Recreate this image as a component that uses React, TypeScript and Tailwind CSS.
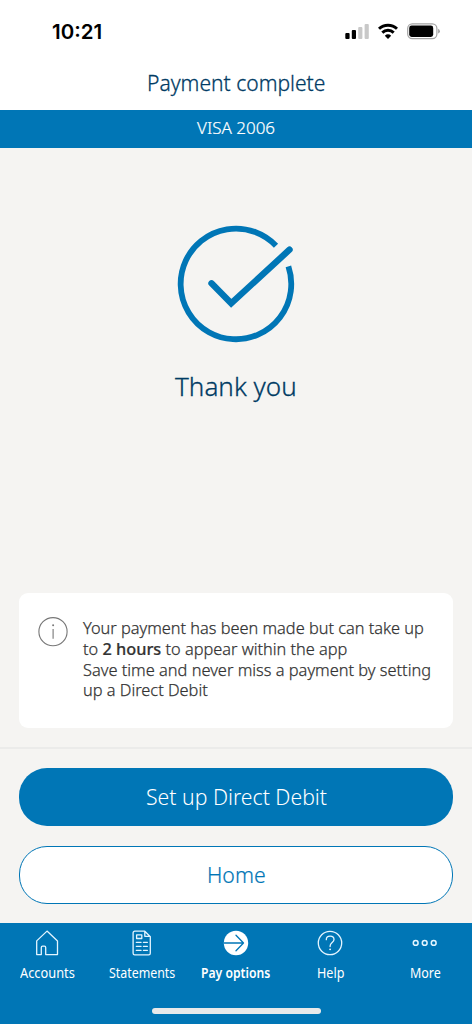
import { useLayoutEffect, useRef, useState, type ReactNode } from 'react';

/** A single line of text, set horizontally to an exact measure. */
function Line({ width, className = '', children }: { width: number; className?: string; children: ReactNode }) {
  const inner = useRef<HTMLSpanElement>(null);
  const [scale, setScale] = useState(1);
  useLayoutEffect(() => {
    if (inner.current) setScale(width / inner.current.offsetWidth);
  }, [width]);
  return (
    <span className={`block whitespace-nowrap ${className}`} style={{ width }}>
      <span ref={inner} className="inline-block origin-left align-top" style={{ transform: `scaleX(${scale})` }}>
        {children}
      </span>
    </span>
  );
}

function StatusBar() {
  return (
    <header className="flex h-[62px] shrink-0 items-start justify-between pt-[21px] pr-[31px] pl-[52px]">
      <Line width={50} className="font-[Inter,sans-serif] text-[20.5px] leading-[22px] font-semibold text-black">
        10:21
      </Line>
      <svg width="96" height="20" viewBox="345 21 96 20" className="shrink-0">
        <rect x="345.3" y="33" width="4.3" height="6" rx="1" />
        <rect x="351.8" y="30" width="4.2" height="9" rx="1" />
        <rect x="358.2" y="27" width="4.2" height="12" rx="1" fill="#c8c8c8" />
        <rect x="364.6" y="24" width="4.2" height="15" rx="1" fill="#c8c8c8" />
        <g fill="none" stroke="#000" strokeWidth="2.9">
          <path d="M379 28.8a13 13 0 0 1 18 0" />
          <path d="M382.3 32.6a8.2 8.2 0 0 1 11.4 0" />
        </g>
        <path d="M388 39l-3.2-3.2a4.7 4.7 0 0 1 6.4 0Z" />
        <rect x="407.7" y="23.9" width="29.2" height="14.8" rx="4.6" fill="none" stroke="#a3a3a3" strokeWidth="1.2" />
        <rect x="409.2" y="25.6" width="24" height="11.4" rx="2.4" />
        <path d="M438.2 28.8q1.6.6 1.6 2.4t-1.6 2.4Z" fill="#999" />
      </svg>
    </header>
  );
}

const tabs = [
  {
    label: 'Accounts',
    width: 55,
    icon: (
      <path d="M9.3 24.4H4.7V10.7L15 .9l10.5 9.8v13.7H13.7v-7.2a1.3 1.3 0 0 0-1.3-1.3h-1.8a1.3 1.3 0 0 0-1.3 1.3Z" transform="translate(0 .2)" />
    ),
  },
  {
    label: 'Statements',
    width: 66,
    icon: (
      <g transform="translate(-.6 0)">
        <path d="M18.4 1.2H8.3a1.6 1.6 0 0 0-1.6 1.6v20.4a1.6 1.6 0 0 0 1.6 1.6h14a1.6 1.6 0 0 0 1.6-1.6V6.8Zm0 0v5.1h5.4" />
        <path d="M10.2 4.9h5.2v3.6h-5.2ZM9.9 12.3h4.8M17 12.3h4M9.9 16.3h4.8M17 16.3h4M9.9 20.3h4.8M17 20.3h4" />
      </g>
    ),
  },
  {
    label: 'Pay options',
    width: 69.5,
    active: true,
    icon: (
      <>
        <circle cx="15" cy="13" r="12.2" fill="#fff" stroke="none" />
        <path d="M3.3 13h19.2M15 5.3l7.5 7.7-7.5 7.7" stroke="#0076b6" strokeWidth="1.3" />
      </>
    ),
  },
  {
    label: 'Help',
    width: 27,
    icon: (
      <>
        <circle cx="15" cy="13" r="11.7" />
        <path d="M11.3 9.7c0-2.1 1.5-3.5 3.8-3.5s3.9 1.4 3.9 3.3c0 3-3.9 3.2-3.9 6.5v.6" />
        <circle cx="15.1" cy="19.3" r=".9" fill="#fff" stroke="none" />
      </>
    ),
  },
  {
    label: 'More',
    width: 30.5,
    icon: (
      <g strokeWidth="1.5">
        <circle cx="5.7" cy="12.9" r="2.4" />
        <circle cx="14.7" cy="12.9" r="2.4" />
        <circle cx="23.7" cy="12.9" r="2.4" />
      </g>
    ),
  },
];

function TabBar() {
  return (
    <nav className="flex h-[101px] shrink-0 flex-col items-center bg-[#0076b6] text-white">
      <div className="grid w-full grid-cols-5 pt-[7px]">
        {tabs.map((tab) => (
          <button key={tab.label} className="flex flex-col items-center">
            <svg width="30" height="26" viewBox="0 0 30 26" fill="none" stroke="#e4f5ff" strokeWidth="1.3" strokeLinejoin="round" strokeLinecap="round">
              {tab.icon}
            </svg>
            <Line
              width={tab.width}
              className={`mt-[7px] text-left text-[13.5px] leading-[20px] ${tab.active ? 'font-semibold' : 'font-normal'}`}
            >
              {tab.label}
            </Line>
          </button>
        ))}
      </div>
      <div className="mt-[25px] h-[6px] w-[169px] rounded-full bg-[#e8e9ea]" />
    </nav>
  );
}

export default function App() {
  return (
    <div className="flex h-[1024px] w-[472px] flex-col overflow-hidden bg-[#f5f4f2] font-['Noto_Sans',sans-serif] font-light">
      <div className="flex h-[110px] shrink-0 flex-col bg-white">
        <StatusBar />
        <h1 className="flex justify-center pt-[4px] text-[22px] leading-[32px] text-[#003b64] [-webkit-text-stroke:0.3px_#003b64]">
          <Line width={178}>Payment complete</Line>
        </h1>
      </div>
      <div className="flex h-[38px] shrink-0 justify-center bg-[#0076b6] pt-[5px] text-[17px] leading-[25px] text-white [-webkit-text-stroke:0.2px_#fff]">
        <Line width={78}>VISA 2006</Line>
      </div>

      <main className="flex flex-1 flex-col">
        <section className="flex flex-1 flex-col items-center pt-[74px]">
          <svg width="124" height="124" viewBox="174 222 124 124" fill="none" stroke="#0076b6">
            <path d="M276 245.8A55.3 55.3 0 1 0 288.4 266.4" strokeWidth="5.8" />
            <path d="M211.5 283.3L231.2 303.3L289.5 249.7" strokeWidth="6.4" strokeLinecap="round" />
          </svg>
          <h2 className="mt-[22px] text-[26.5px] leading-[36px] text-[#003b64] [-webkit-text-stroke:0.3px_#003b64]">
            <Line width={122}>Thank you</Line>
          </h2>
        </section>

        <section className="mx-[19px] mb-[19px] flex h-[135px] shrink-0 rounded-[9px] bg-white pt-[24px] pl-[19px]">
          <svg width="30" height="30" viewBox="0 0 30 30" fill="none" stroke="#777" strokeWidth="1.1" className="shrink-0">
            <circle cx="15" cy="14.7" r="14.1" />
            <path d="M15.1 12v9.7" />
            <circle cx="15.1" cy="8.2" r="1" fill="#777" stroke="none" />
          </svg>
          <p className="mt-px ml-[14.5px] text-[17px] leading-[20.8px] text-[#333] [-webkit-text-stroke:0.25px_#333]">
            <Line width={341}>Your payment has been made but can take up</Line>
            <Line width={264}>
              to <b className="font-medium [-webkit-text-stroke:0.2px_#333]">2 hours</b> to appear within the app
            </Line>
            <Line width={348}>Save time and never miss a payment by setting</Line>
            <Line width={125}>up a Direct Debit</Line>
          </p>
        </section>

        <footer className="flex h-[176px] shrink-0 flex-col gap-[20px] border-t-2 border-[#ebebea] px-[19px] pt-[19px]">
          <button className="flex h-[58px] shrink-0 items-center justify-center rounded-[28px] bg-[#0076b6] text-[22.5px] leading-[32px] text-white">
            <Line width={181} className="text-left">Set up Direct Debit</Line>
          </button>
          <button className="flex h-[58px] shrink-0 items-center justify-center rounded-[28px] border border-[#0076b6] bg-white text-[22.5px] leading-[32px] text-[#0076b6] [-webkit-text-stroke:0.2px_#0076b6]">
            <Line width={58.5} className="text-left">Home</Line>
          </button>
        </footer>
      </main>
      <TabBar />
    </div>
  );
}
